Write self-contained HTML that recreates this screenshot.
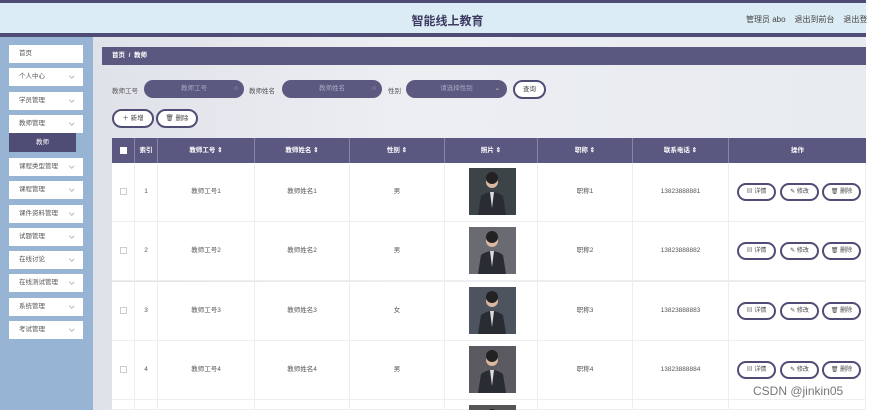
<!DOCTYPE html>
<html><head><meta charset="utf-8"><style>
*{margin:0;padding:0;box-sizing:border-box}
html,body{width:869px;height:410px;overflow:hidden}
body{font-family:"Liberation Sans","Noto Sans CJK SC",sans-serif;background:#fff;font-size:7px;color:#555}
#wrap{position:relative;width:869px;height:410px;overflow:hidden}
.a{position:absolute}
.hdr{left:0;top:0;width:866px;height:37px;background:#dcecf4;border-top:3px solid #4f4d75;border-bottom:4px solid #4f4d75}
.side{left:0;top:37px;width:93px;height:373px;background:#98b4d4}
.main{left:93px;top:37px;width:773px;height:373px;background:linear-gradient(90deg,#dfe2e9,#eceef2 40%,#e8ebf0)}
.mi{left:9px;width:74px;height:18px;background:#fff;font-size:6.5px;color:#555;line-height:18px;padding-left:10px}
.mi:after{content:"";position:absolute;right:10px;top:6px;width:2.5px;height:2.5px;border-right:1px solid #bbb;border-bottom:1px solid #bbb;transform:rotate(45deg)}
.mi.n:after{display:none}
.pill{height:18px;border-radius:9px;background:#5b5980;color:#a9a8c2;font-size:6.5px;text-align:center;line-height:18px}
.btn{height:19px;border-radius:10px;background:#fff;border:2px solid #4f4d75;font-size:6.5px;color:#444;text-align:center;line-height:15px}
.th{top:138px;height:25px;background:#5a5880;color:#fff;font-size:6.5px;font-weight:bold;line-height:25px;text-align:center;border-right:1px solid #8886a6}
.td{height:59px;background:#fff;border-right:1px solid #eee;border-bottom:1px solid #eee;font-size:6.5px;color:#555;text-align:center}
.ph{width:47px;height:47px;overflow:hidden}
.ab{height:18px;width:39px;border-radius:9px;border:2px solid #4f4d75;background:#fff;font-size:6px;color:#444;text-align:center;line-height:14px}
</style></head><body><div id="wrap">
<div class="a hdr"></div>
<div class="a" style="left:0;top:12px;width:895px;text-align:center;font-size:12px;font-weight:bold;color:#3d3b63">智能线上教育</div>
<div class="a" style="left:746px;top:14px;font-size:8px;color:#444;white-space:nowrap">管理员 abo &nbsp;&nbsp; 退出到前台 &nbsp;&nbsp; 退出登</div>
<div class="a side"></div>
<div class="a main"></div>
<div class="a mi n" style="top:45px">首页</div>
<div class="a mi" style="top:68px">个人中心</div>
<div class="a mi" style="top:92px">学员管理</div>
<div class="a mi" style="top:115px">教师管理</div>
<div class="a" style="left:9px;top:133px;width:67px;height:19px;background:#4f4d75;color:#fff;font-size:6.5px;text-align:center;line-height:19px">教师</div>
<div class="a mi" style="top:158px">课程类型管理</div>
<div class="a mi" style="top:181px">课程管理</div>
<div class="a mi" style="top:205px">课件资料管理</div>
<div class="a mi" style="top:228px">试题管理</div>
<div class="a mi" style="top:251px">在线讨论</div>
<div class="a mi" style="top:274px">在线测试管理</div>
<div class="a mi" style="top:298px">系统管理</div>
<div class="a mi" style="top:321px">考试管理</div>

<div class="a" style="left:102px;top:47px;width:764px;height:18px;background:#5a5880;color:#fff;font-size:6.5px;font-weight:bold;line-height:18px;padding-left:10px">首页 &nbsp;/&nbsp; 教师</div>
<div class="a" style="left:112px;top:85px;font-size:6.5px;color:#555">教师工号</div>
<div class="a pill" style="left:144px;top:80px;width:100px">教师工号<span style="position:absolute;right:6px;color:#ccc">○</span></div>
<div class="a" style="left:249px;top:85px;font-size:6.5px;color:#555">教师姓名</div>
<div class="a pill" style="left:282px;top:80px;width:100px">教师姓名<span style="position:absolute;right:6px;color:#ccc">○</span></div>
<div class="a" style="left:388px;top:85px;font-size:6.5px;color:#555">性别</div>
<div class="a pill" style="left:406px;top:80px;width:101px">请选择性别<span style="position:absolute;right:7px;color:#ccc">⌄</span></div>
<div class="a btn" style="left:513px;top:80px;width:33px">查询</div>
<div class="a btn" style="left:112px;top:109px;width:42px">＋ 新增</div>
<div class="a btn" style="left:156px;top:109px;width:42px">🗑 删除</div>

<div class="a th" style="left:112px;width:23px"><span style="display:inline-block;width:7px;height:7px;background:#fff;vertical-align:middle"></span></div>
<div class="a th" style="left:135px;width:23px">索引</div>
<div class="a th" style="left:158px;width:97px">教师工号 ⇕</div>
<div class="a th" style="left:255px;width:95px">教师姓名 ⇕</div>
<div class="a th" style="left:350px;width:95px">性别 ⇕</div>
<div class="a th" style="left:445px;width:93px">照片 ⇕</div>
<div class="a th" style="left:538px;width:95px">职称 ⇕</div>
<div class="a th" style="left:633px;width:96px">联系电话 ⇕</div>
<div class="a th" style="left:729px;width:137px;border-right:0">操作</div>

<div id="rows"></div>
<script>
var tops=[163,222,282,341,400],sex=['男','男','女','男',''];
var cols=[[112,23],[135,23],[158,97],[255,95],[350,95],[445,93],[538,95],[633,96],[729,137]];
var ph=['#3c4448','#6a6a72','#4d5460','#5a5a60','#555'];var h='';
for(var i=0;i<5;i++){var t=tops[i],n=i+1,hh=(i<4?59:10);
var txt=['<span style="display:inline-block;width:7px;height:7px;border:1px solid #ccc;vertical-align:middle"></span>',n,'教师工号'+n,'教师姓名'+n,sex[i],'','职称'+n,'1382388888'+n,''];
for(var c=0;c<9;c++){h+='<div class="a td" style="left:'+cols[c][0]+'px;top:'+t+'px;width:'+cols[c][1]+'px;height:'+hh+'px;line-height:58px">'+(i<4?txt[c]:'')+'</div>';}
h+='<div class="a ph" style="left:469px;top:'+(t+5)+'px;height:'+(i<4?47:5)+'px;background:'+ph[i]+'"><svg width="47" height="47"><circle cx="23" cy="14" r="6" fill="#d9b7a0"/><circle cx="23" cy="10" r="6" fill="#222"/><path d="M9 47 L12 28 Q23 20 34 28 L37 47Z" fill="#2a2c34"/><path d="M21 24 L23 40 L25 24Z" fill="#ddd"/></svg></div>';
if(i<4){var y=t+20;h+='<div class="a ab" style="left:737px;top:'+y+'px">▤ 详情</div><div class="a ab" style="left:780px;top:'+y+'px">✎ 修改</div><div class="a ab" style="left:822px;top:'+y+'px">🗑 删除</div>';}}
document.getElementById('rows').innerHTML=h;
</script>
<div class="a" style="left:753px;top:384px;font-size:12px;color:#777">CSDN @jinkin05</div>
</div></body></html>
